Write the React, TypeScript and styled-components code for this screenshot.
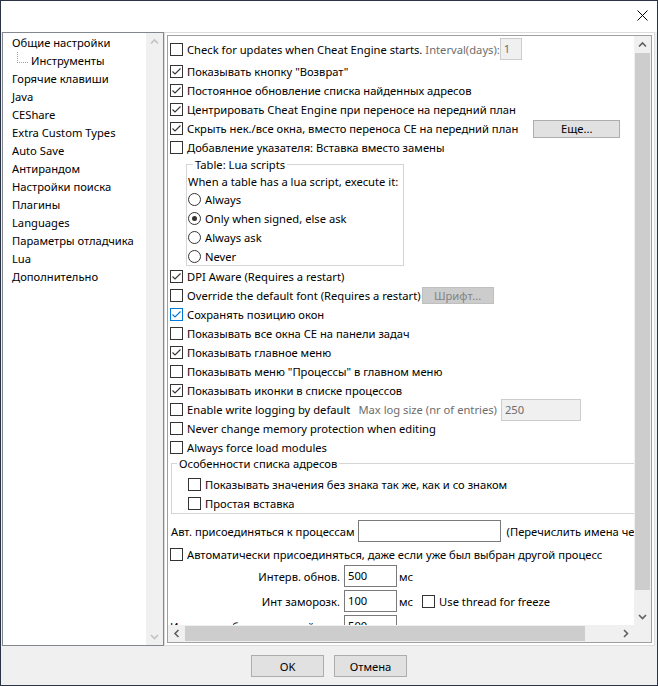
import styled, { createGlobalStyle } from "styled-components";

const GlobalStyle = createGlobalStyle`
    html, body {
        margin: 0;
        padding: 0;
        background: #ffffff;
    }
    body {
        font-family: "Noto Sans", "Segoe UI", sans-serif;
        font-size: 11.2px;
        color: #000000;
    }
    * {
        box-sizing: border-box;
    }
`;

const Window = styled.div`
    width: 658px;
    height: 686px;
    border: 1px solid #2a3444;
    background: #f0f0f0;
    display: flex;
    flex-direction: column;
    overflow: hidden;
`;

const TitleBar = styled.div`
    flex: none;
    height: 31px;
    background: #ffffff;
    display: flex;
    justify-content: flex-end;
    align-items: flex-start;
    padding: 9px 9px 0 0;
`;

const Main = styled.div`
    flex: none;
    height: 614px;
    display: flex;
    padding-left: 1px;
`;

const TreePanel = styled.div`
    width: 162px;
    height: 100%;
    border: 1px solid #828790;
    background: #ffffff;
    display: flex;
`;

const TreeList = styled.div`
    flex: 1;
    padding-top: 1px;
`;

const TreeItem = styled.div<{ $level?: number }>`
    position: relative;
    height: 18px;
    line-height: 18px;
    white-space: nowrap;
    padding-left: ${p => (p.$level ? 28 : 9)}px;

    &::before {
        content: "";
        display: ${p => (p.$level ? "block" : "none")};
        position: absolute;
        left: 14px;
        top: 0;
        width: 10px;
        height: 10px;
        border-left: 1px dotted #a0a0a0;
        border-bottom: 1px dotted #a0a0a0;
    }
`;

const VScroll = styled.div`
    width: 17px;
    flex: none;
    background: #f0f0f0;
    display: flex;
    flex-direction: column;
`;

const HScroll = styled.div`
    height: 17px;
    background: #f0f0f0;
    display: flex;
    min-width: 0;
`;

const ArrowCell = styled.div`
    width: 17px;
    height: 17px;
    flex: none;
    display: flex;
    align-items: center;
    justify-content: center;
`;

const Spacer = styled.div`
    flex: 1;
`;

const VThumb = styled.div<{ $size: number }>`
    flex: none;
    height: ${p => p.$size}px;
    margin: 0 1px;
    background: #cdcdcd;
`;

const HThumb = styled.div<{ $size: number }>`
    flex: none;
    width: ${p => p.$size}px;
    margin: 1px 0;
    background: #cdcdcd;
`;

const SettingsPanel = styled.div`
    width: 491px;
    height: 100%;
    border: 1px solid #dcdcdc;
    padding: 2px;
    background: #ffffff;
`;

const SettingsFrame = styled.div`
    height: 100%;
    border: 1px solid #a0a0a0;
    display: grid;
    grid-template-columns: minmax(0, 1fr) 17px;
    grid-template-rows: minmax(0, 1fr) 17px;
`;

const Viewport = styled.div`
    overflow: hidden;
    background: #ffffff;
`;

const Corner = styled.div`
    background: #f0f0f0;
`;

const Content = styled.div`
    width: 620px;
    padding-left: 2px;
`;

const Row = styled.div<{ $h?: number; $indent?: number; $top?: number }>`
    display: flex;
    align-items: center;
    height: ${p => p.$h ?? 19}px;
    padding-left: ${p => p.$indent ?? 0}px;
    margin-top: ${p => p.$top ?? 0}px;
    white-space: nowrap;
`;

const CheckBox = styled.span<{ $accent?: boolean }>`
    flex: none;
    width: 13px;
    height: 13px;
    margin-right: 4px;
    border: 1px solid ${p => (p.$accent ? "#0078d7" : "#333333")};
    background: #ffffff;
    display: flex;
    align-items: center;
    justify-content: center;
`;

const RadioCircle = styled.span`
    flex: none;
    width: 13px;
    height: 13px;
    margin-right: 4px;
    border: 1px solid #333333;
    border-radius: 50%;
    background: #ffffff;
    display: flex;
    align-items: center;
    justify-content: center;
`;

const RadioDot = styled.span`
    width: 5px;
    height: 5px;
    border-radius: 50%;
    background: #333333;
`;

const Muted = styled.span<{ $gap?: number }>`
    color: #6d6d6d;
    margin-left: ${p => p.$gap ?? 0}px;
`;

const Plain = styled.span<{ $gap?: number }>`
    margin-left: ${p => p.$gap ?? 0}px;
`;

const TextBox = styled.div<{ $w: number; $disabled?: boolean; $gap?: number }>`
    flex: none;
    width: ${p => p.$w}px;
    height: 22px;
    margin-left: ${p => p.$gap ?? 0}px;
    border: 1px solid ${p => (p.$disabled ? "#cccccc" : "#7a7a7a")};
    background: ${p => (p.$disabled ? "#f0f0f0" : "#ffffff")};
    color: ${p => (p.$disabled ? "#6d6d6d" : "#000000")};
    padding-left: 3px;
    line-height: 20px;
    overflow: hidden;
`;

const PushButton = styled.div<{ $w: number; $h: number; $disabled?: boolean; $gap?: number }>`
    flex: none;
    width: ${p => p.$w}px;
    height: ${p => p.$h}px;
    margin-left: ${p => p.$gap ?? 0}px;
    border: 1px solid ${p => (p.$disabled ? "#bfbfbf" : "#adadad")};
    background: ${p => (p.$disabled ? "#cccccc" : "#e1e1e1")};
    color: ${p => (p.$disabled ? "#838383" : "#000000")};
    display: flex;
    align-items: center;
    justify-content: center;
`;

const Group = styled.fieldset<{ $indent: number; $width: number; $padTop: number }>`
    margin: 0 0 0 ${p => p.$indent}px;
    padding: ${p => p.$padTop}px 0 0 0;
    width: ${p => p.$width}px;
    min-width: 0;
    border: 1px solid #d5d5d5;
`;

const GroupTitle = styled.legend<{ $offset: number }>`
    margin-left: ${p => p.$offset}px;
    padding: 0 2px;
    height: 15px;
    line-height: 15px;
`;

const TimingGrid = styled.div`
    display: grid;
    grid-template-columns: 174px 53px auto;
    row-gap: 3px;
    align-items: center;
    margin-top: 1px;
    white-space: nowrap;
`;

const TimingLabel = styled.div`
    text-align: right;
    padding-right: 4px;
    overflow: hidden;
`;

const TimingUnit = styled.div`
    display: flex;
    align-items: center;
    padding-left: 2px;
`;

const InlineCheck = styled.span<{ $gap?: number }>`
    display: inline-flex;
    align-items: center;
    margin-left: ${p => p.$gap ?? 0}px;
`;

const Footer = styled.div`
    flex: 1;
    display: flex;
    justify-content: center;
    gap: 10px;
    padding-top: 9px;
`;

const Chevron = ({ dir, color }: { dir: "up" | "down" | "left" | "right"; color: string }) => {
    const paths = {
        up: "M1 5.5 L4.5 2 L8 5.5",
        down: "M1 2 L4.5 5.5 L8 2",
        left: "M5.5 1 L2 4.5 L5.5 8",
        right: "M2 1 L5.5 4.5 L2 8"
    };
    const vertical = dir === "up" || dir === "down";
    return (
        <svg width={vertical ? 9 : 7} height={vertical ? 7 : 9} viewBox={vertical ? "0 0 9 7" : "0 0 7 9"}>
            <path d={paths[dir]} fill="none" stroke={color} strokeWidth="1.6" />
        </svg>
    );
};

const Check = ({ checked, accent, children }: { checked?: boolean; accent?: boolean; children: string }) => (
    <InlineCheck>
        <CheckBox $accent={accent}>
            {checked && (
                <svg width="11" height="11" viewBox="0 0 11 11">
                    <path
                        d="M1.5 5.5 L4 8 L9.5 2.5"
                        fill="none"
                        stroke={accent ? "#0078d7" : "#333333"}
                        strokeWidth="1.1"
                    />
                </svg>
            )}
        </CheckBox>
        <span>{children}</span>
    </InlineCheck>
);

const Radio = ({ selected, children }: { selected?: boolean; children: string }) => (
    <InlineCheck>
        <RadioCircle>{selected && <RadioDot />}</RadioCircle>
        <span>{children}</span>
    </InlineCheck>
);

const treeItems = [
    { label: "Общие настройки" },
    { label: "Инструменты", level: 1 },
    { label: "Горячие клавиши" },
    { label: "Java" },
    { label: "CEShare" },
    { label: "Extra Custom Types" },
    { label: "Auto Save" },
    { label: "Антирандом" },
    { label: "Настройки поиска" },
    { label: "Плагины" },
    { label: "Languages" },
    { label: "Параметры отладчика" },
    { label: "Lua" },
    { label: "Дополнительно" }
];

const middleChecks = [
    { label: "Сохранять позицию окон", checked: true, accent: true },
    { label: "Показывать все окна CE на панели задач" },
    { label: "Показывать главное меню", checked: true },
    { label: "Показывать меню \"Процессы\" в главном меню" },
    { label: "Показывать иконки в списке процессов", checked: true }
];

const App = () => {
    return (
        <>
            <GlobalStyle />
            <Window>
                <TitleBar>
                    <svg width="11" height="11" viewBox="0 0 11 11">
                        <path d="M0.5 0.5 L10.5 10.5 M10.5 0.5 L0.5 10.5" stroke="#000" strokeWidth="1" />
                    </svg>
                </TitleBar>
                <Main>
                    <TreePanel>
                        <TreeList>
                            {treeItems.map(item => (
                                <TreeItem key={item.label} $level={item.level}>
                                    {item.label}
                                </TreeItem>
                            ))}
                        </TreeList>
                        <VScroll>
                            <ArrowCell>
                                <Chevron dir="up" color="#c2c2c2" />
                            </ArrowCell>
                            <Spacer />
                            <ArrowCell>
                                <Chevron dir="down" color="#c2c2c2" />
                            </ArrowCell>
                        </VScroll>
                    </TreePanel>
                    <SettingsPanel>
                        <SettingsFrame>
                            <Viewport>
                                <Content>
                                    <Row $h={26}>
                                        <Check>Check for updates when Cheat Engine starts.</Check>
                                        <Muted $gap={3}>Interval(days):</Muted>
                                        <TextBox $w={22} $disabled>1</TextBox>
                                    </Row>
                                    <Row><Check checked>Показывать кнопку "Возврат"</Check></Row>
                                    <Row><Check checked>Постоянное обновление списка найденных адресов</Check></Row>
                                    <Row><Check checked>Центрировать Cheat Engine при переносе на передний план</Check></Row>
                                    <Row>
                                        <Check checked>Скрыть нек./все окна, вместо переноса CE на передний план</Check>
                                        <PushButton $w={87} $h={18} $gap={15}>Еще...</PushButton>
                                    </Row>
                                    <Row><Check>Добавление указателя: Вставка вместо замены</Check></Row>

                                    <Group $indent={16} $width={218} $padTop={1}>
                                        <GroupTitle $offset={6}>Table: Lua scripts</GroupTitle>
                                        <Row $h={17} $indent={1}>When a table has a lua script, execute it:</Row>
                                        <Row $indent={1}><Radio>Always</Radio></Row>
                                        <Row $indent={1}><Radio selected>Only when signed, else ask</Radio></Row>
                                        <Row $indent={1}><Radio>Always ask</Radio></Row>
                                        <Row $h={18} $indent={1}><Radio>Never</Radio></Row>
                                    </Group>

                                    <Row $top={1}><Check checked>DPI Aware (Requires a restart)</Check></Row>
                                    <Row>
                                        <Check>Override the default font (Requires a restart)</Check>
                                        <PushButton $w={72} $h={17} $disabled $gap={1}>Шрифт...</PushButton>
                                    </Row>
                                    {middleChecks.map(c => (
                                        <Row key={c.label}>
                                            <Check checked={c.checked} accent={c.accent}>{c.label}</Check>
                                        </Row>
                                    ))}
                                    <Row>
                                        <Check>Enable write logging by default</Check>
                                        <Muted $gap={8}>Max log size (nr of entries)</Muted>
                                        <TextBox $w={80} $disabled $gap={4}>250</TextBox>
                                    </Row>
                                    <Row><Check>Never change memory protection when editing</Check></Row>
                                    <Row $h={18}><Check>Always force load modules</Check></Row>

                                    <Group $indent={1} $width={480} $padTop={4}>
                                        <GroupTitle $offset={5}>Особенности списка адресов</GroupTitle>
                                        <Row $indent={16}><Check>Показывать значения без знака так же, как и со знаком</Check></Row>
                                        <Row $indent={16}><Check>Простая вставка</Check></Row>
                                    </Group>

                                    <Row $h={22} $top={6} $indent={1}>
                                        <span>Авт. присоединяться к процессам</span>
                                        <TextBox $w={143} $gap={3} />
                                        <Plain $gap={6}>(Перечислить имена через запятую)</Plain>
                                    </Row>
                                    <Row $top={3}>
                                        <Check>Автоматически присоединяться, даже если уже был выбран другой процесс</Check>
                                    </Row>

                                    <TimingGrid>
                                        <TimingLabel>Интерв. обнов.</TimingLabel>
                                        <TextBox $w={53}>500</TextBox>
                                        <TimingUnit>мс</TimingUnit>

                                        <TimingLabel>Инт заморозк.</TimingLabel>
                                        <TextBox $w={53}>100</TextBox>
                                        <TimingUnit>
                                            мс
                                            <InlineCheck $gap={9}>
                                                <Check>Use thread for freeze</Check>
                                            </InlineCheck>
                                        </TimingUnit>

                                        <TimingLabel>Интервал обновления найденных</TimingLabel>
                                        <TextBox $w={53}>500</TextBox>
                                        <TimingUnit>мс</TimingUnit>
                                    </TimingGrid>
                                </Content>
                            </Viewport>
                            <VScroll>
                                <ArrowCell>
                                    <Chevron dir="up" color="#606060" />
                                </ArrowCell>
                                <VThumb $size={537} />
                                <Spacer />
                                <ArrowCell>
                                    <Chevron dir="down" color="#606060" />
                                </ArrowCell>
                            </VScroll>
                            <HScroll>
                                <ArrowCell>
                                    <Chevron dir="left" color="#606060" />
                                </ArrowCell>
                                <HThumb $size={400} />
                                <Spacer />
                                <ArrowCell>
                                    <Chevron dir="right" color="#606060" />
                                </ArrowCell>
                            </HScroll>
                            <Corner />
                        </SettingsFrame>
                    </SettingsPanel>
                </Main>
                <Footer>
                    <PushButton $w={73} $h={22}>OK</PushButton>
                    <PushButton $w={73} $h={22}>Отмена</PushButton>
                </Footer>
            </Window>
        </>
    );
};

export default App;
